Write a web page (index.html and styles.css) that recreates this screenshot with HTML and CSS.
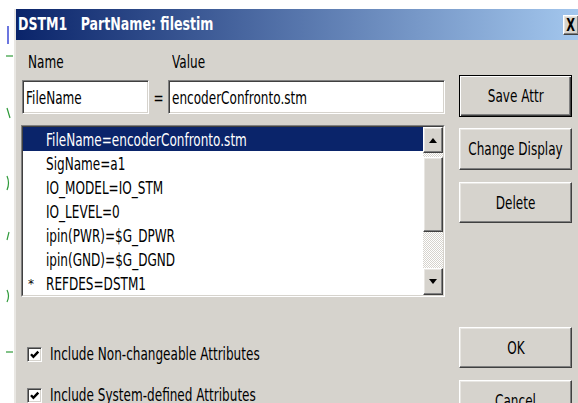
FILE: index.html
```html
<!DOCTYPE html>
<html>
<head>
<meta charset="utf-8">
<title>DSTM1 PartName: filestim</title>
<link rel="stylesheet" href="styles.css">
</head>
<body>
<div class="desk">
  <!-- schematic wires peeking out behind the dialog -->
  <svg class="schematic" width="15" height="403" viewBox="0 0 15 403">
    <path d="M8 26V44" stroke="#3b49d4" stroke-width="1.5" fill="none"/>
    <g stroke="#2f9a3a" stroke-width="1.2" fill="none">
      <path d="M6 56H13"/>
      <path d="M7 108L10 118"/>
      <path d="M7 176Q10 183 7 190"/>
      <path d="M9 232L7 240"/>
      <path d="M7 290Q10 296 7 302"/>
      <path d="M6 352H13"/>
    </g>
  </svg>

  <div class="dialog">
    <div class="titlebar">
      <span class="n title">DSTM1<span class="gap"></span>PartName: filestim</span>
      <span class="close raised"><span class="nc">X</span></span>
    </div>

    <div class="client">
      <div class="main">
        <div class="labels">
          <span class="label-name"><span class="n">Name</span></span>
          <span></span>
          <span class="label-value"><span class="n">Value</span></span>
        </div>

        <div class="fields">
          <div class="field name-field sunken"><span class="n">FileName</span></div>
          <div class="eq"><span class="nc">=</span></div>
          <div class="field sunken"><span class="n">encoderConfronto.stm</span></div>
        </div>

        <div class="list">
          <div class="list-inner">
            <ul class="rows">
              <li class="row selected"><span class="mark"></span><span class="n">FileName=encoderConfronto.stm</span></li>
              <li class="row"><span class="mark"></span><span class="n">SigName=a1</span></li>
              <li class="row"><span class="mark"></span><span class="n">IO_MODEL=IO_STM</span></li>
              <li class="row"><span class="mark"></span><span class="n">IO_LEVEL=0</span></li>
              <li class="row"><span class="mark"></span><span class="n">ipin(PWR)=$G_DPWR</span></li>
              <li class="row"><span class="mark"></span><span class="n">ipin(GND)=$G_DGND</span></li>
              <li class="row"><span class="mark">*</span><span class="n">REFDES=DSTM1</span></li>
            </ul>
            <div class="scroll">
              <div class="sbtn raised"><span class="up-arrow"></span></div>
              <div class="thumb raised"></div>
              <div class="sbtn down raised"><span class="down-arrow"></span></div>
            </div>
          </div>
        </div>

        <div class="checks">
          <label class="check">
            <span class="box sunken"><svg width="11" height="11" viewBox="0 0 11 11"><path d="M2 5.2L4.4 7.8L9.3 2.6" stroke="#000" stroke-width="2.4" fill="none"/></svg></span>
            <span class="n">Include Non-changeable Attributes</span>
          </label>
          <label class="check">
            <span class="box sunken"><svg width="11" height="11" viewBox="0 0 11 11"><path d="M2 5.2L4.4 7.8L9.3 2.6" stroke="#000" stroke-width="2.4" fill="none"/></svg></span>
            <span class="n">Include System-defined Attributes</span>
          </label>
        </div>
      </div>

      <div class="side">
        <div class="btn default raised"><span class="nc">Save Attr</span></div>
        <div class="btn b-display raised"><span class="nc">Change Display</span></div>
        <div class="btn b-delete raised"><span class="nc">Delete</span></div>
        <div class="btn b-ok raised"><span class="nc">OK</span></div>
        <div class="btn b-cancel raised"><span class="nc">Cancel</span></div>
      </div>
    </div>
  </div>
</div>
</body>
</html>
```

FILE: styles.css
```css
* { box-sizing: border-box; }

html, body { margin: 0; padding: 0; }

body {
  background: #fff;
  font-family: "DejaVu Sans", "Liberation Sans", sans-serif;
  font-size: 18px;
  line-height: 20px;
  color: #000;
  overflow: hidden;
}

.desk {
  position: relative;
  width: 578px;
  height: 403px;
  overflow: hidden;
}

.schematic { position: absolute; left: 0; top: 0; }

/* narrow system lettering */
.n {
  display: inline-block;
  white-space: nowrap;
  transform: scaleX(0.67);
  transform-origin: 0 50%;
}
.nc {
  display: inline-block;
  white-space: nowrap;
  transform: scaleX(0.67);
  transform-origin: 50% 50%;
}

/* 3D edges */
.raised {
  background: #d6d3cd;
  border: 1px solid;
  border-color: #fff #404040 #404040 #fff;
  box-shadow: inset -1px -1px 0 #808080, inset 1px 1px 0 #e8e6e2;
}
.sunken {
  border: 1px solid;
  border-color: #808080 #fff #fff #808080;
  box-shadow: inset 1px 1px 0 #404040, inset -1px -1px 0 #d6d3cd;
}

.dialog {
  margin: 9px 0 0 14px;
  width: 576px;
  height: 400px;
  background: #d6d3cd;
  border-left: 2px solid #e9e7e3;
}

.titlebar {
  height: 31px;
  display: flex;
  align-items: center;
  justify-content: space-between;
  padding-left: 2px;
  padding-right: 11px;
  background: linear-gradient(90deg, #0a246a 0%, #a6caf0 100%);
}
.title {
  font-size: 17px;
  font-weight: bold;
  line-height: 31px;
  color: #fff;
  transform: scaleX(0.74);
}
.title .gap { display: inline-block; width: 18px; }

.close {
  width: 16px;
  height: 20px;
  display: flex;
  align-items: center;
  justify-content: center;
  font-size: 17px;
  font-weight: bold;
  line-height: 20px;
  overflow: hidden;
}

.client { display: flex; padding-left: 5px; }
.main { width: 424px; }

.labels, .fields {
  display: grid;
  grid-template-columns: 128px 19px 277px;
}
.labels { margin-top: 12px; height: 20px; }
.label-name { padding-left: 7px; }
.label-value { padding-left: 4px; }

.fields { margin-top: 8px; height: 34px; }
.field {
  background: #fff;
  display: flex;
  align-items: center;
  padding: 2px 0 0 3px;
  overflow: hidden;
}
.name-field { margin-left: 1px; }
.eq {
  display: flex;
  align-items: center;
  justify-content: center;
  padding-top: 2px;
}

.list {
  margin-top: 11px;
  height: 172px;
  border: 1px solid;
  border-color: #808080 #fff #fff #808080;
}
.list-inner {
  height: 100%;
  display: flex;
  background: #fff;
  border: 1px solid;
  border-color: #404040 #d6d3cd #d6d3cd #404040;
}
.rows {
  flex: 1;
  margin: 0;
  padding: 0;
  list-style: none;
  overflow: hidden;
}
.row {
  display: flex;
  height: 24px;
  line-height: 24px;
  padding: 1px 0 0 5px;
}
.row.selected { background: #0a246a; color: #fff; }
.mark {
  width: 18px;
  flex: none;
  font-size: 12px;
  line-height: 12px;
  padding-top: 6px;
}

.scroll {
  width: 20px;
  flex: none;
  display: flex;
  flex-direction: column;
  background: repeating-conic-gradient(#fff 0 25%, #d6d3cd 0 50%) 0 0 / 2px 2px;
}
.sbtn {
  height: 26px;
  display: flex;
  align-items: center;
  justify-content: center;
}
.sbtn.down { height: 27px; margin-top: auto; }
.thumb { height: 75px; margin-top: 4px; }
.up-arrow {
  width: 0; height: 0;
  border-left: 4px solid transparent;
  border-right: 4px solid transparent;
  border-bottom: 5px solid #000;
}
.down-arrow {
  width: 0; height: 0;
  border-left: 4px solid transparent;
  border-right: 4px solid transparent;
  border-top: 5px solid #000;
}

.checks { margin-top: 47px; }
.check {
  display: flex;
  align-items: center;
  height: 20px;
  padding-left: 6px;
}
.check + .check { margin-top: 21px; }
.box {
  width: 15px;
  height: 15px;
  flex: none;
  margin-right: 8px;
  background: #fff;
  display: flex;
  align-items: center;
  justify-content: center;
}

.side {
  width: 113px;
  margin-left: 14px;
  padding-top: 35px;
  display: flex;
  flex-direction: column;
}
.btn {
  height: 42px;
  flex: none;
  display: flex;
  align-items: center;
  justify-content: center;
}
.btn.default {
  border-color: #000;
  box-shadow: inset 1px 1px 0 #fff, inset -1px -1px 0 #404040, inset -2px -2px 0 #808080;
}
.b-display { margin-top: 11px; }
.b-delete { margin-top: 12px; height: 41px; }
.b-ok { margin-top: 104px; height: 41px; }
.b-cancel { margin-top: 12px; }
```
